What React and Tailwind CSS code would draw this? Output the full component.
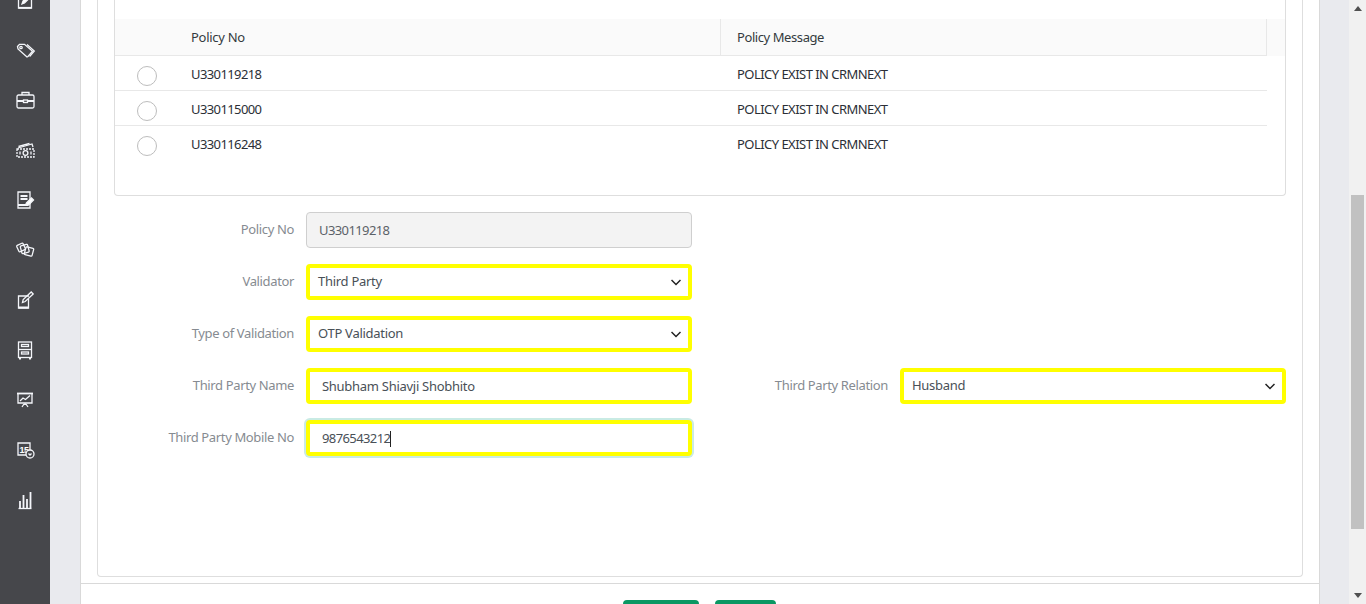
const font = { fontFamily: '"Noto Sans", "Liberation Sans", sans-serif' };

const icons = [
  <g key="a"><path d="M5.500 8v12h13V8" /><path d="M5.500 19.800h13" strokeWidth="1.800" /><path d="M9 16l1-3 5-5.500 2 2-5.500 5.500z" fill="#fff" /></g>,
  <g key="b" transform="translate(0 2)"><path d="M4.500 6.500l2-2.200h5l8 7-4.500 5.200-1 .5-9-8z" /><circle cx="8" cy="7.500" r="1.200" /><path d="M14 4.500l7.300 6.500-4.700 5.500" /></g>,
  <g key="c"><rect x="4" y="7" width="17" height="13" rx="1.500" /><path d="M9 7V4.500h7V7" /><path d="M4 13h17" strokeWidth="2" /><rect x="10.500" y="12" width="4" height="2.500" fill="#46474b" /></g>,
  <g key="d" transform="translate(0 1)"><path d="M5 9l14-4 1 3" /><path d="M5.500 7.500l11-3" /><rect x="4" y="10" width="17" height="8" strokeDasharray="2 1" /><circle cx="12.500" cy="14" r="2.400" /><path d="M7 12.500v3M18 12.500v3" /></g>,
  <g key="e"><path d="M5 4h12v16H5z" /><path d="M7.500 8h7M7.500 11h7" strokeWidth="2" /><path d="M5 17h10" strokeWidth="2" /><path d="M12.500 17l1-2 5-5 2 2-5 5z" fill="#fff" /></g>,
  <g key="f"><rect x="4.500" y="6" width="7" height="7" rx="1" transform="rotate(-25 8 9.500)" /><rect x="8" y="7" width="7.500" height="8" rx="1" transform="rotate(-15 11.700 11)" /><rect x="12" y="9.500" width="8" height="8" rx="1" transform="rotate(15 16 13.500)" /></g>,
  <g key="g"><path d="M16 8H5.500v12h10V11" /><path d="M9.500 14.500l.7-3 8-7.500 2 2-8 7.500z" /><path d="M5.500 19.500h10" strokeWidth="2" /></g>,
  <g key="h"><rect x="5.500" y="4" width="13" height="15.500" /><path d="M5.500 11.500h13" /><rect x="8.500" y="6.500" width="7" height="2" /><rect x="8.500" y="14" width="7" height="2" /><path d="M7 20v1.500M17 20v1.500" strokeWidth="2" /></g>,
  <g key="i"><path d="M4 5.500h16" strokeWidth="1.800" /><path d="M5 5v10h14V5" /><path d="M7 13l3-3 2.500 1.500 4.500-4" /><path d="M12 15v2M9 19l2-3M15 19l-2-3" /></g>,
  <g key="j" transform="translate(1 0)"><path d="M16 14V5H4v12h9" /><text x="5.500" y="14.500" fontSize="9" fill="#fff" stroke="none" fontFamily="Liberation Sans" fontWeight="700">1</text><text x="10" y="14.500" fontSize="9" fill="#fff" stroke="none" fontFamily="Liberation Sans" fontWeight="700">5</text><circle cx="16" cy="16" r="4" fill="#46474b" /><path d="M14.500 15.500l1.500 1.500 1.500-1.500" /></g>,
  <g key="k"><path d="M7 20v-7M10.500 20V7M14 20v-9M17.500 20V4" strokeWidth="1.800" /><path d="M5.500 20.500h13" /></g>,
];

function Sidebar() {
  return (
    <div className="w-[50px] shrink-0 bg-[#46474b] flex flex-col items-center -mt-[25px] h-[629px]">
      {icons.map((g, i) => (
        <div key={i} className="h-[50px] shrink-0 flex items-center justify-center">
          <svg width="24" height="24" viewBox="0 0 24 24" fill="none" stroke="#f4f6fa" strokeWidth="1.300" overflow="visible">{g}</svg>
        </div>
      ))}
    </div>
  );
}

const rows = ["U330119218", "U330115000", "U330116248"];

function PolicyTable() {
  return (
    <div className="h-[196px] border border-t-0 border-[#dedede] rounded-b-[4px] pt-[19px]">
      <div className="flex h-[37px] bg-[#fafafa]">
        <div className="w-[1152px] flex border-b border-r border-[#e8e8e8]">
          <div className="w-[606px] flex items-center pl-[76px] pt-[1px] border-r border-[#e8e8e8] text-[#343a40]">Policy No</div>
          <div className="flex-1 flex items-center pl-[16px] pt-[1px] text-[#343a40] tracking-[-0.42px]">Policy Message</div>
        </div>
      </div>
      {rows.map((r, i) => (
        <div key={r} className={`w-[1152px] h-[35px] flex items-center pt-[3px] ${i < 2 ? "border-b border-[#e8e8e8]" : ""}`}>
          <div className="w-[76px] shrink-0 flex pl-[22px] pt-[2px]">
            <span className="w-[20px] h-[20px] rounded-full border border-[#bdbdbd] bg-white" />
          </div>
          <div className="w-[546px] text-[#2b2f36] tracking-[-0.6px]">{r}</div>
          <div className="text-[#2b2f36] tracking-[-0.54px]">POLICY EXIST IN CRMNEXT</div>
        </div>
      ))}
    </div>
  );
}

function Chevron() {
  return (
    <svg width="10" height="7" viewBox="0 0 10 7" fill="none" stroke="#222" strokeWidth="1.500" className="shrink-0">
      <path d="M.5 1l4.500 4.500L9.500 1" />
    </svg>
  );
}

function Label({ children }) {
  return <div className="w-[180px] shrink-0 text-right text-[#868b91] tracking-[-0.36px]">{children}</div>;
}

function Select({ value }) {
  return (
    <div className="w-[386px] h-[36px] border-4 border-[#ffff00] rounded-[4px] bg-white flex items-center justify-between pl-[8px] pr-[7px] text-[#495057]">
      <span>{value}</span>
      <Chevron />
    </div>
  );
}

function Text({ value, focus }) {
  return (
    <div className={`w-[386px] h-[36px] border-4 border-[#ffff00] rounded-[4px] bg-white flex items-center pl-[12px] pt-[1px] text-[#495057] ${focus ? "ring-2 ring-[#c9ebe4] tracking-[-0.6px]" : ""}`}>
      <span>{value}</span>
      {focus && <span className="w-px h-[16px] bg-[#222]" />}
    </div>
  );
}

function Field({ label, children }) {
  return (
    <div className="flex items-center gap-[12px]">
      <Label>{label}</Label>
      {children}
    </div>
  );
}

function Form() {
  return (
    <div className="grid grid-cols-[594px_578px] gap-y-[16px] mt-[16px]">
      <Field label="Policy No">
        <div className="w-[386px] h-[36px] border border-[#cfcfcf] rounded-[4px] bg-[#f3f3f3] flex items-center pl-[12px] pt-[1px] text-[#5c6268] tracking-[-0.6px]">U330119218</div>
      </Field>
      <div />
      <Field label="Validator"><Select value="Third Party" /></Field>
      <div />
      <Field label="Type of Validation"><Select value="OTP Validation" /></Field>
      <div />
      <Field label="Third Party Name"><Text value="Shubham Shiavji Shobhito" /></Field>
      <Field label="Third Party Relation"><Select value="Husband" /></Field>
      <Field label="Third Party Mobile No"><Text value="9876543212" focus /></Field>
    </div>
  );
}

function Scrollbar() {
  return (
    <div className="w-[17px] shrink-0 bg-[#f1f1f1] flex flex-col items-center relative">
      <div className="mt-[195px] w-[13px] h-[334px] bg-[#c1c1c1]" />
      <span className="absolute top-[6px] w-0 h-0 border-x-[4px] border-x-transparent border-b-[5px] border-b-[#505050]" />
      <span className="absolute bottom-[6px] w-0 h-0 border-x-[4px] border-x-transparent border-t-[5px] border-t-[#505050]" />
    </div>
  );
}

export default function App() {
  return (
    <div className="w-[1366px] h-[604px] overflow-hidden flex bg-[#e9eaee] text-[13px] tracking-[-0.28px]" style={font}>
      <Sidebar />
      <div className="flex-1 pl-[30px] pr-[29px]">
        <div className="h-[604px] overflow-hidden bg-white border-x border-[#d9d9d9] flex flex-col">
          <div className="mx-[16px] h-[577px] shrink-0 border border-t-0 border-[#dedede] rounded-b-[4px] px-[16px]">
            <PolicyTable />
            <Form />
          </div>
          <div className="mt-[6px] border-t border-[#d9d9d9] pt-[16px] pr-[2px] flex justify-center gap-[16px] shrink-0">
            <div className="w-[76px] h-[36px] rounded-[4px] bg-[#0a9863]" />
            <div className="w-[61px] h-[36px] rounded-[4px] bg-[#0a9863]" />
          </div>
        </div>
      </div>
      <Scrollbar />
    </div>
  );
}
